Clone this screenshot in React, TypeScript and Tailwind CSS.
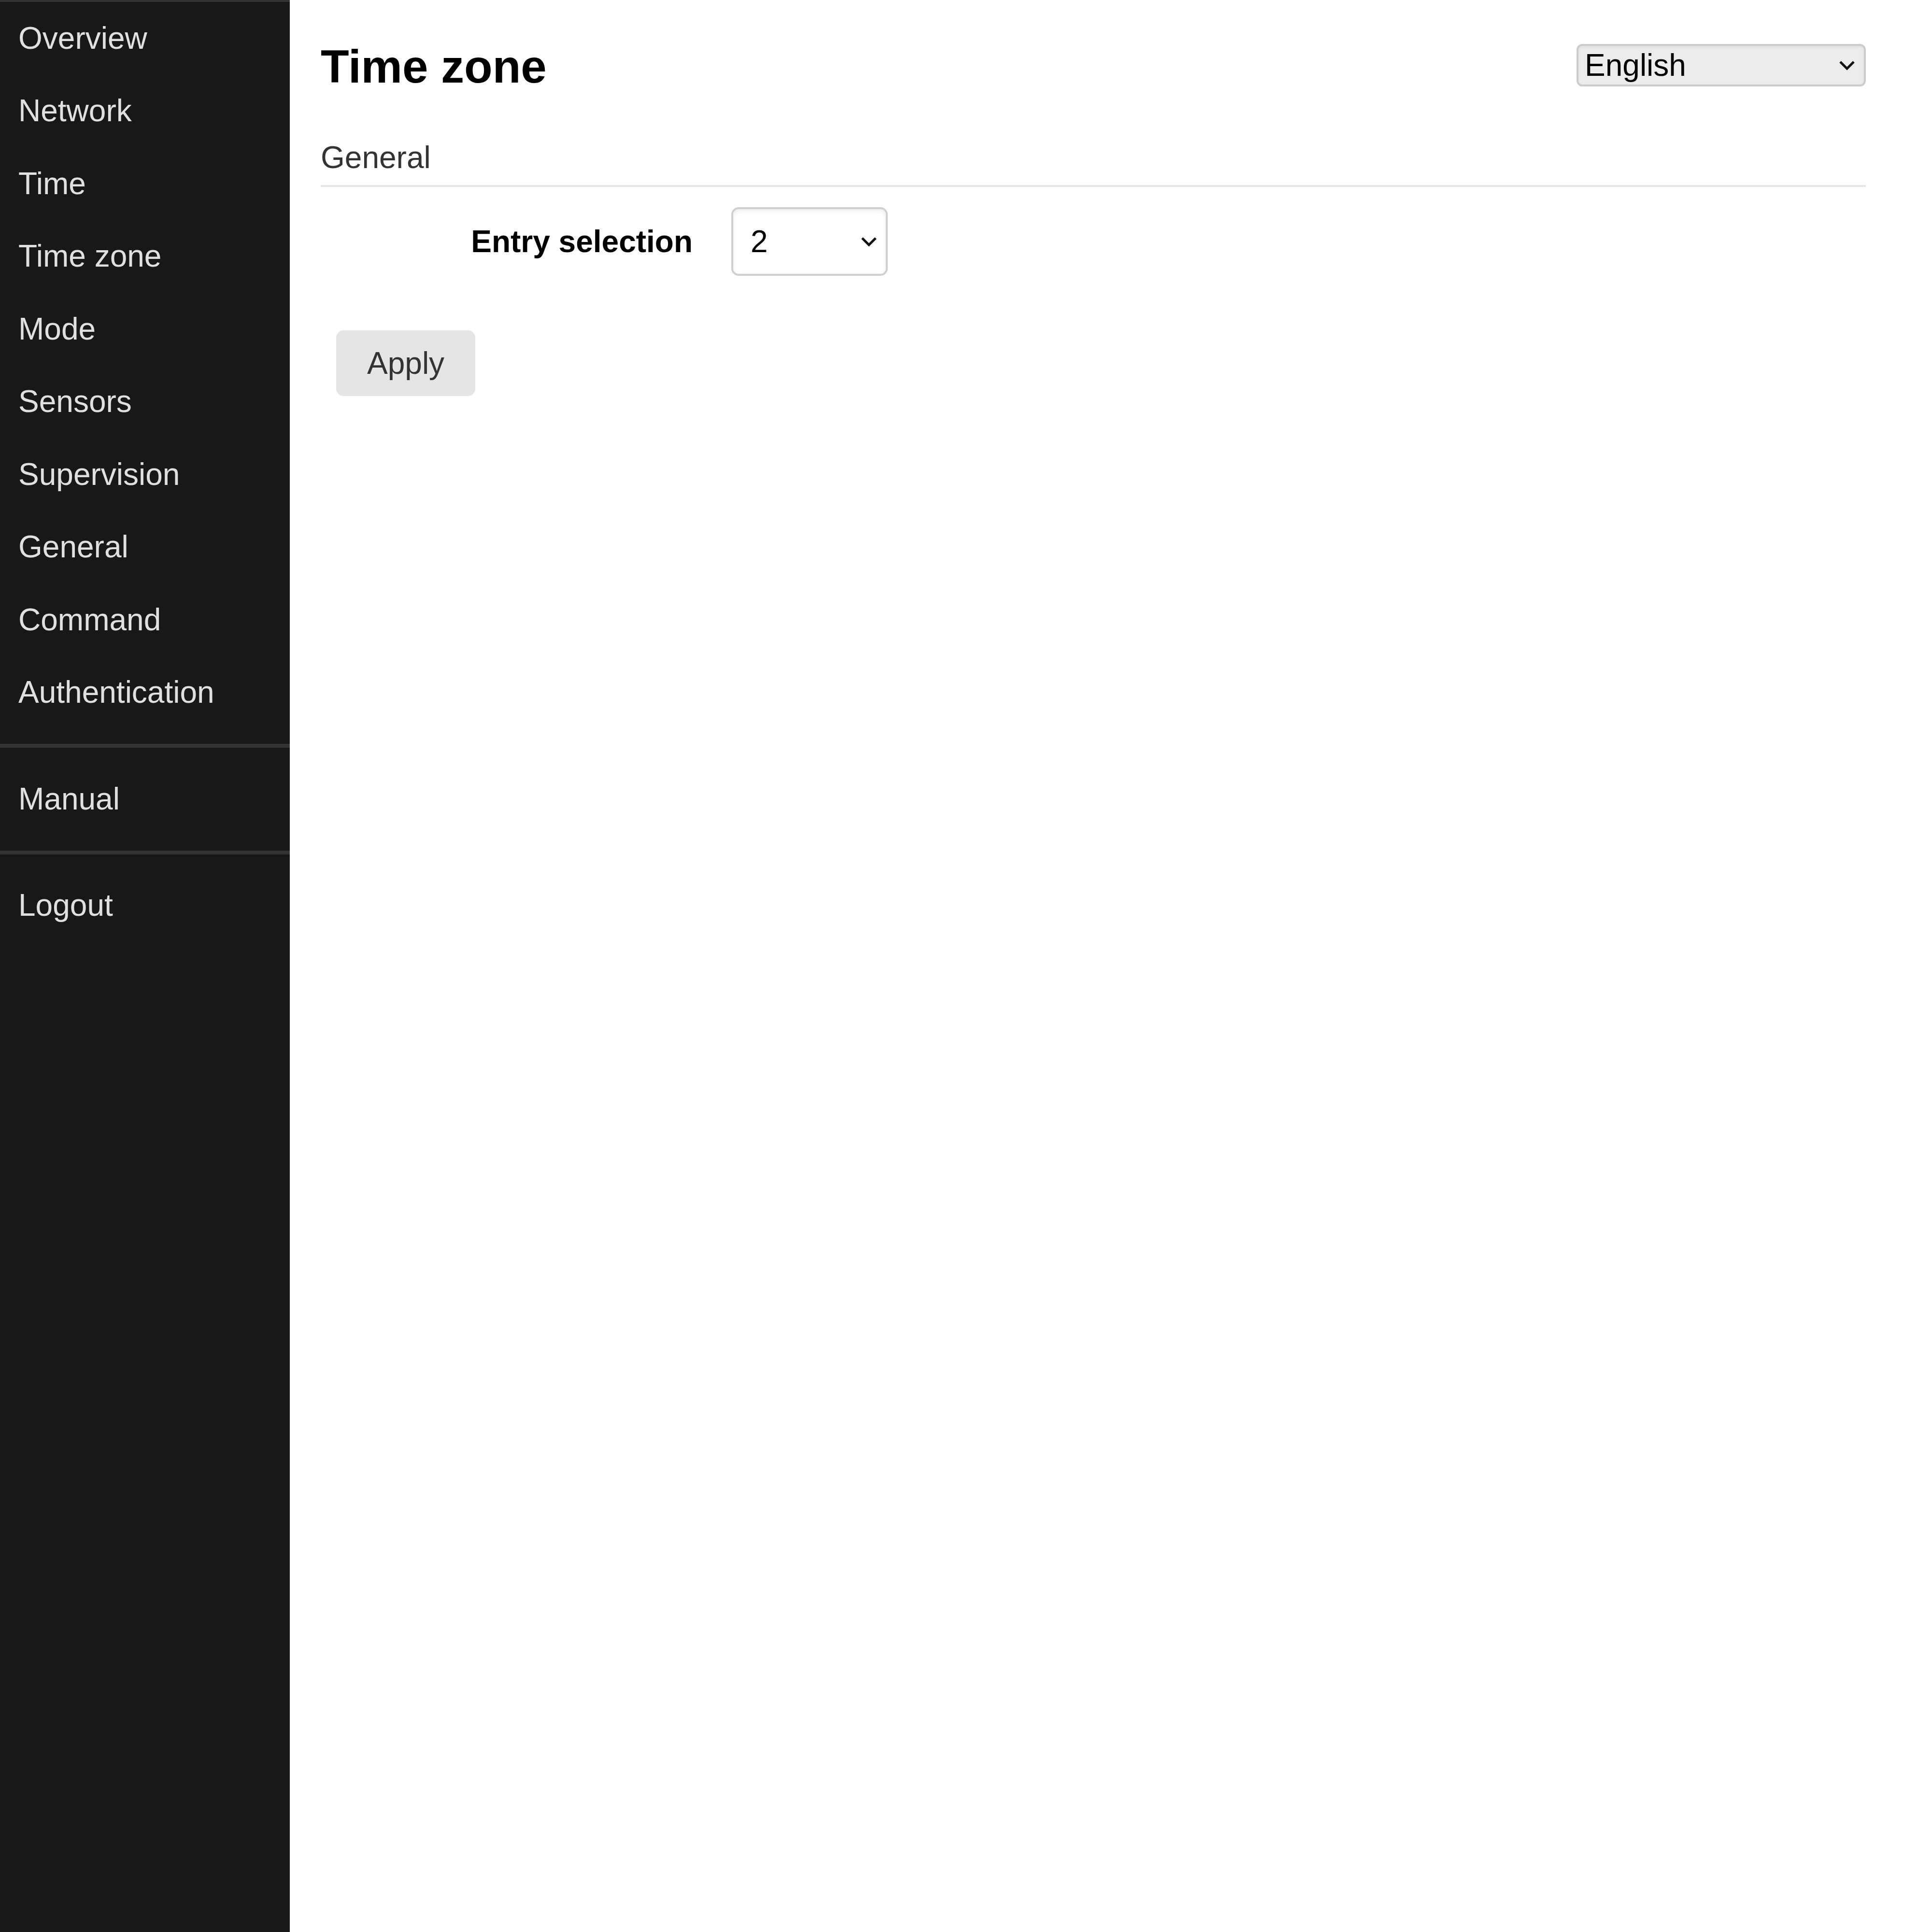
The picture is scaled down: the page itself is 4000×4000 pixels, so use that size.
const menu = [
  "Overview",
  "Network",
  "Time",
  "Time zone",
  "Mode",
  "Sensors",
  "Supervision",
  "General",
  "Command",
  "Authentication",
];

function Chevron() {
  return (
    <svg width="34" height="22" viewBox="0 0 34 22" fill="none" className="pointer-events-none absolute top-1/2 right-[22px] -translate-y-1/2">
      <polyline points="3,4 17,18 31,4" stroke="#111" strokeWidth="5" strokeLinecap="butt" strokeLinejoin="miter" />
    </svg>
  );
}

function NavItem({ label }: { label: string }) {
  return (
    <a href="#" className="flex h-[150.5px] items-center pl-[38px] text-[64px] leading-[73.5px] text-[#e0e0e0]">
      {label}
    </a>
  );
}

export default function App() {
  return (
    <div className="flex min-h-screen w-full bg-white font-['Liberation_Sans',Arial,sans-serif]">
      <nav className="w-[600px] shrink-0 border-t-4 border-[#333333] bg-[#181818]">
        <div className="flex flex-col">
          {menu.map((m) => (
            <NavItem key={m} label={m} />
          ))}
        </div>
        <div className="my-[31px] h-[8px] bg-[#333333]" />
        <NavItem label="Manual" />
        <div className="my-[31px] h-[8px] bg-[#333333]" />
        <NavItem label="Logout" />
      </nav>

      <main className="flex-1 pt-[83px] pr-[137px] pl-[64px]">
        <div className="flex items-start justify-between">
          <h1 className="text-[96px] leading-[110px] font-bold text-black">Time zone</h1>
          <div className="relative mt-[8px]">
            <select className="block h-[88px] w-[599px] appearance-none rounded-[12px] border-4 border-[#cccccc] bg-[#ececec] py-0 pl-[13px] text-[64px] leading-[74px] text-black shadow-[inset_0_3px_6px_rgba(0,0,0,0.06)] outline-none">
              <option>English</option>
            </select>
            <Chevron />
          </div>
        </div>

        <h2 className="mt-[97px] border-b-4 border-[#e5e5e5] pb-[20px] text-[64px] leading-[73px] font-normal text-[#333333]">
          General
        </h2>

        <div className="mt-[42px] flex items-center gap-[80px]">
          <label className="w-[770px] text-right text-[64px] leading-[74px] font-bold text-black">Entry selection</label>
          <div className="relative">
            <select
              defaultValue="2"
              className="block h-[142px] w-[324px] appearance-none rounded-[15px] border-4 border-[#d0d0d0] bg-white py-0 pl-[36px] text-[64px] leading-[74px] text-black shadow-[inset_0_4px_10px_rgba(0,0,0,0.08)] outline-none"
            >
              <option>1</option>
              <option>2</option>
              <option>3</option>
            </select>
            <Chevron />
          </div>
        </div>

        <button className="mt-[113px] ml-[32px] h-[136px] rounded-[15px] bg-[#e5e5e5] px-[64px] text-[64px] leading-[74px] text-[#333333]">
          Apply
        </button>
      </main>
    </div>
  );
}
